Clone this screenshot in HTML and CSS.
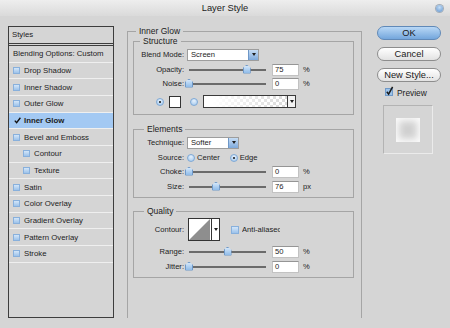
FILE: index.html
```html
<!DOCTYPE html>
<html lang="en">
<head>
    <meta charset="UTF-8">
    <title>Layer Style</title>
    <link rel="stylesheet" href="styles.css">
</head>
<body>
    <div class="titlebar">
        <span class="title">Layer Style</span>
        <span class="zoom-dot"></span>
    </div>

    <div class="main">
        <div class="styles-list">
            <div class="list-head">Styles</div>
            <div class="list-item">Blending Options: Custom</div>
            <div class="list-item"><span class="box"></span>Drop Shadow</div>
            <div class="list-item"><span class="box"></span>Inner Shadow</div>
            <div class="list-item"><span class="box"></span>Outer Glow</div>
            <div class="list-item active">
                <svg class="tick" width="7" height="7" viewBox="0 0 7 7"><path d="M0.8 3.6 L2.6 5.6 L6.4 0.8" fill="none" stroke="#111" stroke-width="1.4"/></svg>Inner Glow
            </div>
            <div class="list-item"><span class="box"></span>Bevel and Emboss</div>
            <div class="list-item sub"><span class="box"></span>Contour</div>
            <div class="list-item sub"><span class="box"></span>Texture</div>
            <div class="list-item"><span class="box"></span>Satin</div>
            <div class="list-item"><span class="box"></span>Color Overlay</div>
            <div class="list-item"><span class="box"></span>Gradient Overlay</div>
            <div class="list-item"><span class="box"></span>Pattern Overlay</div>
            <div class="list-item"><span class="box"></span>Stroke</div>
        </div>

        <fieldset class="effect">
            <legend>Inner Glow</legend>

            <fieldset class="group">
                <legend class="near">Structure</legend>
                <div class="row">
                    <span class="label">Blend Mode:</span>
                    <div class="select wide"><span class="value">Screen</span><span class="drop"><i class="arrow"></i></span></div>
                </div>
                <div class="row">
                    <span class="label">Opacity:</span>
                    <div class="slider"><span class="thumb" style="left: 75%"></span></div>
                    <span class="field">75</span><span class="unit">%</span>
                </div>
                <div class="row mt1">
                    <span class="label">Noise:</span>
                    <div class="slider"><span class="thumb" style="left: 0%"></span></div>
                    <span class="field">0</span><span class="unit">%</span>
                </div>
                <div class="row color-row mt5">
                    <span class="radio on"></span>
                    <span class="swatch"></span>
                    <span class="radio second"></span>
                    <div class="gradient"><span class="ramp"></span><span class="gdrop"><i class="arrow"></i></span></div>
                </div>
            </fieldset>

            <fieldset class="group elements">
                <legend>Elements</legend>
                <div class="row">
                    <span class="label">Technique:</span>
                    <div class="select"><span class="value">Softer</span><span class="drop"><i class="arrow"></i></span></div>
                </div>
                <div class="row">
                    <span class="label">Source:</span>
                    <span class="radio source"></span><span class="opt">Center</span>
                    <span class="radio on edge"></span><span class="opt">Edge</span>
                </div>
                <div class="row mt1">
                    <span class="label">Choke:</span>
                    <div class="slider"><span class="thumb" style="left: 0%"></span></div>
                    <span class="field">0</span><span class="unit">%</span>
                </div>
                <div class="row">
                    <span class="label">Size:</span>
                    <div class="slider"><span class="thumb" style="left: 35%"></span></div>
                    <span class="field">76</span><span class="unit">px</span>
                </div>
            </fieldset>

            <fieldset class="group quality">
                <legend>Quality</legend>
                <div class="row tall">
                    <span class="label">Contour:</span>
                    <div class="contour">
                        <svg width="22" height="21" viewBox="0 0 22 21"><polygon points="0,21 21,0 21,21" fill="#8e8e8e"/></svg>
                        <span class="cdrop"><i class="arrow"></i></span>
                    </div>
                    <span class="box anti"></span><span class="anti-text">Anti-aliased</span>
                </div>
                <div class="row mt4">
                    <span class="label">Range:</span>
                    <div class="slider"><span class="thumb" style="left: 50%"></span></div>
                    <span class="field">50</span><span class="unit">%</span>
                </div>
                <div class="row">
                    <span class="label">Jitter:</span>
                    <div class="slider"><span class="thumb" style="left: 0%"></span></div>
                    <span class="field">0</span><span class="unit">%</span>
                </div>
            </fieldset>
        </fieldset>

        <div class="actions">
            <div class="button default">OK</div>
            <div class="button">Cancel</div>
            <div class="button">New Style...</div>
            <div class="preview-toggle">
                <span class="checked">
                    <svg width="10" height="11" viewBox="0 0 10 11"><rect x="0.5" y="2.5" width="7" height="7" fill="#9cc3ea" stroke="#6f99c8"/><path d="M1.8 5.8 L3.6 8.2 L7.6 0.8" fill="none" stroke="#1b1b1b" stroke-width="1.5"/></svg>
                </span>
                Preview
            </div>
            <div class="preview-box">
                <span class="preview-swatch"></span>
            </div>
        </div>
    </div>
</body>
</html>
```

FILE: styles.css
```css
* {
    box-sizing: border-box;
}

body {
    margin: 0;
    width: 450px;
    height: 328px;
    overflow: hidden;
    background: #d5d5d5;
    font-family: "Liberation Sans", Arial, sans-serif;
    font-size: 7.6px;
    color: #1c1c1c;
}

/* title bar */
.titlebar {
    height: 16px;
    display: grid;
    grid-template-columns: 1fr auto 1fr;
    align-items: center;
    background: linear-gradient(#eeeeee, #dadada);
}

.title {
    grid-column: 2;
    font-size: 9.3px;
    color: #222;
}

.zoom-dot {
    grid-column: 3;
    justify-self: end;
    width: 7px;
    height: 7px;
    margin-right: 7px;
    border-radius: 50%;
    background: radial-gradient(circle at 50% 35%, #c4def7, #5f92cc);
    box-shadow: 0 0 0 1px #a3adb8;
}

.main {
    display: flex;
    align-items: flex-start;
}

/* left list */
.styles-list {
    margin: 10px 0 0 8px;
    width: 106px;
    height: 292px;
    border: 1px solid #3d3d3d;
    font-size: 7.8px;
}

.list-head {
    height: 19px;
    line-height: 16px;
    padding-left: 3px;
    border-bottom: 3px double #3d3d3d;
}

.list-item {
    height: 16.67px;
    display: flex;
    align-items: center;
    gap: 4px;
    padding-left: 4px;
    border-bottom: 1px solid #efefef;
    white-space: nowrap;
}

.list-item.sub {
    padding-left: 14px;
}

.list-item.active {
    background: #a3c9f3;
    font-weight: bold;
    padding-left: 5px;
    gap: 3px;
}

.box {
    flex: none;
    width: 7px;
    height: 7px;
    background: linear-gradient(#d3e6f9, #9cc2ea);
    border: 1px solid #88b0dc;
}

/* group boxes */
fieldset {
    margin: 0;
    padding: 0;
    min-width: 0;
    border: 1px solid #a5a5a5;
}

legend {
    padding: 0 3px;
    margin-left: 10px;
    font-size: 8.5px;
    line-height: 9px;
    color: #222;
}

.effect {
    margin: 11px 0 0 13px;
    width: 235px;
    height: 291px;
    padding: 1px 7px 0 5px;
    border-bottom: none;
}

.effect > legend {
    margin-left: 3px;
}

legend.near {
    margin-left: 6px;
}

.group {
    padding-bottom: 6px;
}

.group.elements {
    margin-top: 10px;
    padding-bottom: 4px;
}

.group.quality {
    margin-top: 9px;
    padding-bottom: 4px;
}

.row {
    display: flex;
    align-items: center;
    height: 13px;
    margin-top: 2px;
    white-space: nowrap;
}

.row.mt1 { margin-top: 1px; }
.row.mt4 { margin-top: 4px; }
.row.mt5 { margin-top: 5px; }

.row.tall {
    height: 23px;
}

.label {
    flex: none;
    width: 50px;
    text-align: right;
}

/* select boxes */
.select {
    display: flex;
    width: 52px;
    height: 12px;
    margin-left: 3px;
    background: #fff;
    border: 1px solid #9d9d9d;
}

.select.wide {
    width: 72px;
}

.select .value {
    flex: 1;
    padding-left: 3px;
    line-height: 10px;
}

.drop {
    width: 10px;
    display: flex;
    align-items: center;
    justify-content: center;
    background: linear-gradient(#c6ddf5, #7eaadd);
    border-left: 1px solid #6e97c7;
}

.arrow {
    width: 0;
    height: 0;
    border-left: 2.5px solid transparent;
    border-right: 2.5px solid transparent;
    border-top: 3px solid #1e1e1e;
}

/* sliders */
.slider {
    position: relative;
    flex: none;
    width: 77px;
    height: 2px;
    margin-left: 5px;
    background: #6b6b6b;
}

.thumb {
    position: absolute;
    top: -4px;
    width: 8px;
    height: 9px;
    margin-left: -4px;
    background: linear-gradient(#d2e6fa, #8fbbe8);
    border: 1px solid #6f99c9;
    clip-path: polygon(50% 0, 100% 40%, 100% 100%, 0 100%, 0 40%);
    border-radius: 1px;
}

.field {
    flex: none;
    width: 27px;
    height: 12px;
    margin-left: 6px;
    padding-left: 2px;
    line-height: 10px;
    background: #fff;
    border: 1px solid #c2c2c2;
    border-top-color: #959595;
}

.unit {
    margin-left: 4px;
}

/* radios and swatches */
.radio {
    flex: none;
    width: 8px;
    height: 8px;
    display: flex;
    align-items: center;
    justify-content: center;
    border-radius: 50%;
    background: radial-gradient(circle at 50% 30%, #e6f1fc, #9ec5ec);
    border: 1px solid #7fa9d6;
}

.radio.on::after {
    content: "";
    width: 2px;
    height: 2px;
    border-radius: 50%;
    background: #111;
}

.color-row {
    padding-left: 22px;
}

.swatch {
    width: 12px;
    height: 12px;
    margin-left: 5px;
    background: #fff;
    border: 1px solid #333;
}

.radio.second {
    margin-left: 9px;
}

.gradient {
    display: flex;
    width: 93px;
    height: 13px;
    margin-left: 5px;
    border: 1px solid #3a3a3a;
}

.ramp {
    flex: 1;
    background:
        linear-gradient(to right, #fff 10%, rgba(255, 255, 255, 0)),
        conic-gradient(#d9d9d9 25%, #fff 0 50%, #d9d9d9 0 75%, #fff 0) 0 0 / 6px 6px;
}

.gdrop {
    width: 8px;
    display: flex;
    align-items: center;
    justify-content: center;
    background: #f2f2f2;
    border-left: 1px solid #3a3a3a;
}

.radio.source {
    margin-left: 3px;
}

.opt {
    margin-left: 2px;
}

.radio.edge {
    margin-left: 10px;
}

/* contour */
.contour {
    display: flex;
    width: 32px;
    height: 23px;
    margin-left: 4px;
    background: #fff;
    border: 1px solid #333;
}

.contour svg {
    display: block;
}

.cdrop {
    flex: 1;
    display: flex;
    align-items: center;
    justify-content: center;
    border-left: 1px solid #333;
}

.box.anti {
    margin-left: 11px;
    width: 8px;
    height: 8px;
}

.anti-text {
    width: 38px;
    margin-left: 3px;
    overflow: hidden;
}

/* right column */
.actions {
    display: flex;
    flex-direction: column;
    align-items: flex-start;
    margin: 10px 0 0 15px;
    width: 64px;
}

.button {
    width: 64px;
    height: 14px;
    display: flex;
    align-items: center;
    justify-content: center;
    border-radius: 7px;
    font-size: 9.3px;
    color: #1a1a1a;
    background: linear-gradient(#ffffff, #e2e2e2);
    border: 1px solid #8d8d8d;
}

.button + .button {
    margin-top: 7px;
}

.button.default {
    background: linear-gradient(#b9d8f6, #73a6dc);
    border-color: #6089b8;
}

.preview-toggle {
    display: flex;
    align-items: center;
    gap: 2px;
    height: 9px;
    margin: 6px 0 0 8px;
    font-size: 8.4px;
}

.checked svg {
    display: block;
    margin-top: -2px;
}

.preview-box {
    width: 50px;
    height: 49px;
    margin: 8px 0 0 6px;
    display: flex;
    align-items: center;
    justify-content: center;
    border: 1px solid #ebebeb;
    border-top-color: #b3b3b3;
    border-left-color: #b3b3b3;
}

.preview-swatch {
    width: 24px;
    height: 24px;
    background: #d0d0d0;
    box-shadow: inset 0 0 7px 3px #fbfbfb;
}
```
